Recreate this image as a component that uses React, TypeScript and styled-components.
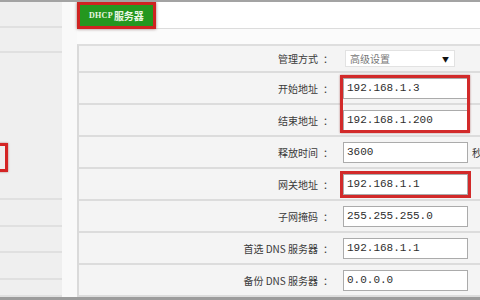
import React from 'react'
import styled, { createGlobalStyle } from 'styled-components'

const GlobalStyle = createGlobalStyle`
  html, body { margin: 0; padding: 0; background: #fff; }
  body { font-family: "Noto Sans CJK SC", "Liberation Sans", sans-serif; }
`;

const Page = styled.div`
  width: 480px;
  height: 300px;
  box-sizing: border-box;
  border-top: 2px solid #a3a3a3;
  border-bottom: 3px solid #9c9c9c;
  display: flex;
  overflow: hidden;
  background: #fff;
`;

const Sidebar = styled.div`
  width: 62px;
  flex: none;
  display: flex;
  flex-direction: column;
  background: #efefef;
  position: relative;
`;

const SideCell = styled.div<{ $h: number }>`
  height: ${p => p.$h}px;
  flex: none;
  box-sizing: border-box;
  border-bottom: 2px solid #e0e0e0;
  &:last-child { border-bottom: none; flex: 1; }
`;

const SideMark = styled.div`
  position: absolute;
  left: -20px;
  top: 141px;
  width: 28px;
  height: 29px;
  border: 3px solid #d42424;
  box-sizing: border-box;
  box-shadow: 0 0 2px rgba(120, 0, 0, 0.5);
`;

const Gutter = styled.div`
  width: 15px;
  flex: none;
  background: #f9f9f9;
`;

const Main = styled.div`
  flex: 1;
  display: flex;
  flex-direction: column;
  min-width: 0;
`;

const Header = styled.div`
  height: 26px;
  border-bottom: 1px solid #dcdcdc;
  display: flex;
  align-items: flex-start;
  background: #fff;
`;

const Tab = styled.div`
  height: 27px;
  box-sizing: border-box;
  padding: 0 9px;
  margin-top: 0;
  background: #24971f;
  border: 3px solid #cf2321;
  box-shadow: 0 0 3px rgba(60, 0, 0, 0.55);
  color: #eaf6e4;
  font-family: "Liberation Serif", "Noto Sans CJK SC", serif;
  font-weight: bold;
  font-size: 10px;
  display: flex;
  align-items: center;
  position: relative;
  z-index: 1;
  span { font-size: 8px; letter-spacing: 0.3px; margin-right: 1px; }
`;

const Spacer = styled.div`
  height: 15px;
  background: #fbfbfb;
`;

const Panel = styled.div`
  flex: 1;
  position: relative;
  background: #f4f4f4;
  border-top: 2px solid #dedede;
  border-left: 2px solid #dadada;
  display: flex;
  flex-direction: column;
`;

const Row = styled.div<{ $first?: boolean }>`
  height: ${p => (p.$first ? 27 : 32)}px;
  flex: none;
  box-sizing: border-box;
  border-bottom: 2px solid #dcdcdc;
  display: flex;
  align-items: center;
`;

const Label = styled.div`
  width: 254px;
  flex: none;
  text-align: right;
  font-size: 10px;
  color: #3a3a3a;
  white-space: nowrap;
`;

const Colon = styled.span`
  display: inline-block;
  width: 10px;
  margin-left: 5px;
  text-align: left;
`;

const Input = styled.div<{ $mark?: boolean }>`
  margin-left: 10px;
  width: 125px;
  height: 21px;
  flex: none;
  box-sizing: border-box;
  background: #fff;
  border: 1px solid #ababab;
  padding: 2px 3px 0;
  font-family: "Liberation Mono", "DejaVu Sans Mono", monospace;
  font-size: 11px;
  line-height: 14px;
  color: #2e2e2e;
  outline: ${p => (p.$mark ? '3px solid #d22a2a' : 'none')};
  outline-offset: 0;
`;

const Select = styled.div`
  margin-left: 12px;
  width: 110px;
  height: 17px;
  box-sizing: border-box;
  background: #fff;
  border: 1px solid #e2e2e2;
  display: flex;
  align-items: center;
  justify-content: space-between;
  padding: 0 5px 0 4px;
  font-size: 10px;
  color: #777;
  i { font-style: normal; font-size: 7px; color: #111; }
`;

const Unit = styled.span`
  margin-left: 4px;
  font-size: 10px;
  color: #333;
`;

const GroupMark = styled.div`
  position: absolute;
  left: 261px;
  top: 29px;
  width: 130px;
  height: 58px;
  box-sizing: border-box;
  border: 3px solid #d22a2a;
  box-shadow: 0 0 2px rgba(120, 0, 0, 0.45);
  pointer-events: none;
`;

const sideCells = [26, 25, 147, 27, 26, 27, 17];

const fields = [
  { label: '开始地址', value: '192.168.1.3' },
  { label: '结束地址', value: '192.168.1.200' },
  { label: '释放时间', value: '3600', unit: '秒' },
  { label: '网关地址', value: '192.168.1.1', mark: true },
  { label: '子网掩码', value: '255.255.255.0' },
  { label: '首选 DNS 服务器', value: '192.168.1.1' },
  { label: '备份 DNS 服务器', value: '0.0.0.0' },
];

const App = () => {
  return (
    <>
      <GlobalStyle />
      <Page>
        <Sidebar>
          {sideCells.map((h, i) => (
            <SideCell key={i} $h={h} />
          ))}
          <SideMark />
        </Sidebar>
        <Gutter />
        <Main>
          <Header>
            <Tab><span>DHCP</span>服务器</Tab>
          </Header>
          <Spacer />
          <Panel>
            <Row $first>
              <Label>管理方式<Colon>：</Colon></Label>
              <Select>高级设置<i>▼</i></Select>
            </Row>
            {fields.map(f => (
              <Row key={f.label}>
                <Label>{f.label}<Colon>：</Colon></Label>
                <Input $mark={f.mark}>{f.value}</Input>
                {f.unit && <Unit>{f.unit}</Unit>}
              </Row>
            ))}
            <GroupMark />
          </Panel>
        </Main>
      </Page>
    </>
  )
}

export default App
